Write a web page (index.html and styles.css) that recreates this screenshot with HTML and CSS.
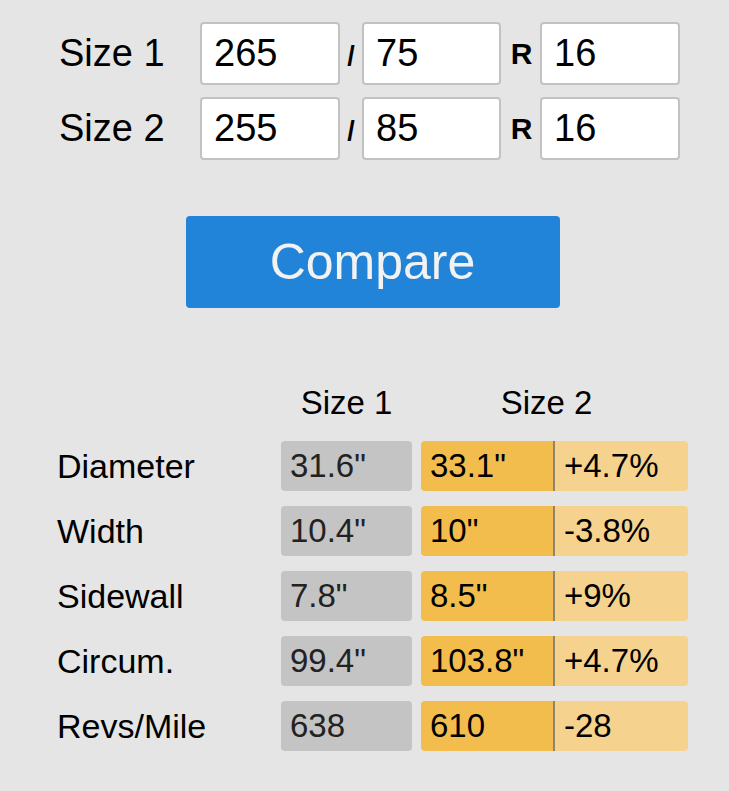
FILE: index.html
```html
<!DOCTYPE html>
<html lang="en">
<head>
    <meta charset="UTF-8">
    <meta name="viewport" content="width=device-width, initial-scale=1.0">
    <title>Tire Size Compare</title>
    <link rel="stylesheet" href="styles.css">
</head>
<body>
    <div class="container">
        <div class="sizes">
            <label class="size-label">Size 1</label>
            <input class="size-input" type="text" value="265">
            <span class="sep sep-slash">/</span>
            <input class="size-input" type="text" value="75">
            <span class="sep">R</span>
            <input class="size-input" type="text" value="16">

            <label class="size-label">Size 2</label>
            <input class="size-input" type="text" value="255">
            <span class="sep sep-slash">/</span>
            <input class="size-input" type="text" value="85">
            <span class="sep">R</span>
            <input class="size-input" type="text" value="16">
        </div>

        <div class="actions">
            <button class="compare">Compare</button>
        </div>

        <div class="results">
            <div></div>
            <div class="head">Size 1</div>
            <div class="head head-2">Size 2</div>

            <div class="name">Diameter</div>
            <div class="cell one">31.6"</div>
            <div class="pair"><div class="cell two">33.1"</div><div class="cell diff">+4.7%</div></div>

            <div class="name">Width</div>
            <div class="cell one">10.4"</div>
            <div class="pair"><div class="cell two">10"</div><div class="cell diff">-3.8%</div></div>

            <div class="name">Sidewall</div>
            <div class="cell one">7.8"</div>
            <div class="pair"><div class="cell two">8.5"</div><div class="cell diff">+9%</div></div>

            <div class="name">Circum.</div>
            <div class="cell one">99.4"</div>
            <div class="pair"><div class="cell two">103.8"</div><div class="cell diff">+4.7%</div></div>

            <div class="name">Revs/Mile</div>
            <div class="cell one">638</div>
            <div class="pair"><div class="cell two">610</div><div class="cell diff">-28</div></div>
        </div>
    </div>
</body>
</html>
```
FILE: styles.css
```css
body {
    margin: 0;
    background-color: #e5e5e5;
    color: #000;
    font-family: "Liberation Sans", Arial, sans-serif;
}
.container {
    width: 631px;
    margin-left: 57px;
    padding-top: 22px;
}
.sizes {
    display: grid;
    grid-template-columns: 141px 140px 22px 139px 39px 140px;
    grid-auto-rows: 63px;
    row-gap: 12px;
    align-items: center;
    padding-left: 2px;
}
.size-label {
    font-size: 38px;
}
.size-input {
    box-sizing: border-box;
    width: 100%;
    height: 63px;
    margin: 0;
    padding: 0 0 0 12px;
    border: 2px solid #c2c2c2;
    border-radius: 4px;
    background-color: #fff;
    font-family: inherit;
    font-size: 38px;
    color: #000;
    outline: none;
}
.sep {
    font-size: 30px;
    font-weight: bold;
    text-align: center;
    padding-left: 2px;
}
.sep-slash {
    font-size: 27px;
    padding-top: 6px;
    padding-left: 0;
}
.actions {
    display: flex;
    justify-content: center;
    margin-top: 56px;
}
.compare {
    width: 374px;
    height: 92px;
    border: none;
    border-radius: 4px;
    background-color: #2184d8;
    color: #f2f2f2;
    font-family: inherit;
    font-size: 50px;
    cursor: pointer;
}
.results {
    display: grid;
    grid-template-columns: 215px 131px 267px;
    grid-template-rows: 47px;
    grid-auto-rows: 50px;
    column-gap: 9px;
    row-gap: 15px;
    align-items: center;
    margin-top: 71px;
    font-size: 33px;
}
.head {
    text-align: center;
}
.head-2 {
    padding-right: 16px;
}
.name {
    font-size: 34px;
}
.pair {
    display: flex;
    height: 50px;
}
.cell {
    box-sizing: border-box;
    height: 50px;
    display: flex;
    align-items: center;
    padding-left: 9px;
    border-radius: 4px;
}
.one {
    background-color: #c4c4c4;
    color: #222;
}
.two {
    width: 134px;
    background-color: #f3bd4d;
    border-right: 2px solid #8f8470;
    border-radius: 4px 0 0 4px;
}
.diff {
    flex: 1;
    background-color: #f5d28d;
    border-radius: 0 4px 4px 0;
}
```
